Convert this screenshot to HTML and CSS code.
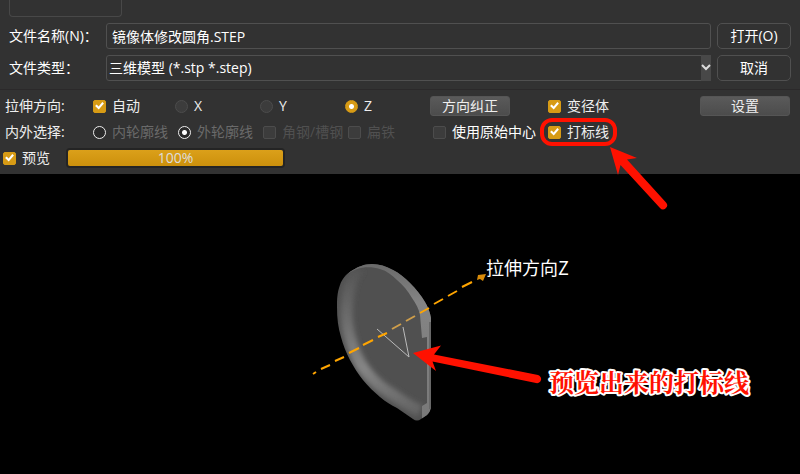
FILE: index.html
```html
<!DOCTYPE html>
<html lang="zh-CN">
  <head>
    <meta charset="utf-8">
    <meta name="viewport" content="width=device-width, initial-scale=1.0">
    <title>打开</title>
    <link rel="stylesheet" href="styles.css">
  </head>
  <body>
    <form class="panel">
      <div class="file-section">
        <div class="side-list"></div>
        <div class="file-row">
          <label for="file-name">文件名称(N)：</label>
          <input class="field" id="file-name" type="text" value="镜像体修改圆角.STEP">
          <button class="dialog-button" type="button">打开(O)</button>
        </div>
        <div class="file-row">
          <label for="file-type">文件类型：</label>
          <span class="select-wrap">
            <select class="field" id="file-type">
              <option>三维模型 (*.stp *.step)</option>
            </select>
            <svg class="chevron" viewBox="0 0 10 26"><path d="M1 10 L5 14 L9 10"/></svg>
          </span>
          <button class="dialog-button" type="button">取消</button>
        </div>
      </div>

      <div class="options">
        <div class="option-row direction-row">
          <span>拉伸方向:</span>
          <label class="option"><input type="checkbox" checked>自动</label>
          <label class="option"><input type="radio" name="axis" disabled>X</label>
          <label class="option"><input type="radio" name="axis" disabled>Y</label>
          <label class="option"><input class="solid" type="radio" name="axis" checked>Z</label>
          <button class="tool-button" type="button">方向纠正</button>
          <label class="option"><input type="checkbox" checked>变径体</label>
          <button class="tool-button settings" type="button">设置</button>
        </div>
        <div class="option-row contour-row">
          <span>内外选择:</span>
          <label class="option dim"><input type="radio" name="contour">内轮廓线</label>
          <label class="option dim"><input type="radio" name="contour" checked>外轮廓线</label>
          <label class="option off"><input type="checkbox" disabled>角钢/槽钢</label>
          <label class="option off"><input type="checkbox" disabled>扁铁</label>
          <label class="option bright"><input type="checkbox">使用原始中心</label>
          <label class="option marked">
            <input type="checkbox" checked>打标线
            <svg class="mark-arrow" viewBox="610 147 58 64">
              <path d="M610 147 L637 158 L627 159.5 L666 202.5 A4 4 0 0 1 660 208 L620.5 165 L618 175 Z"/>
            </svg>
          </label>
        </div>
        <div class="option-row preview-row">
          <label class="option"><input type="checkbox" checked>预览</label>
          <div class="progress" role="progressbar" aria-label="预览" aria-valuenow="100">
            <div class="progress-fill" style="width: 100%"></div>
            <span class="progress-text">100%</span>
          </div>
        </div>
      </div>
    </form>

    <div class="viewport">
      <svg class="scene" viewBox="0 174 800 300">
        <defs>
          <clipPath id="body-clip">
            <path d="M372 264 C364 264 358 267 353 270 C346 274 342 279 340 285 C337 293 337 300 337 307 C337 318 338 327 341 337 C343 345 346 352 350 360 C354 367 358 374 363 380 C368 386 374 392 380 397 C386 402 391 405 397 408 L413 419 Q417 422 421 419 L427 415 Q431 411 431 406 L431 318 C430 312 428 307 425 302 C421 295 416 289 410 283 C405 278 399 273 393 270 C386 266 379 264 372 264 Z"/>
          </clipPath>
          <linearGradient id="rim" x1="0" y1="0" x2="0" y2="1">
            <stop offset="0" stop-color="#606060"/>
            <stop offset="0.3" stop-color="#848484"/>
            <stop offset="1" stop-color="#787878"/>
          </linearGradient>
          <linearGradient id="bevel" x1="0" y1="0" x2="0" y2="1">
            <stop offset="0" stop-color="#545454"/>
            <stop offset="0.35" stop-color="#6c6c6c"/>
            <stop offset="0.7" stop-color="#868686"/>
            <stop offset="1" stop-color="#646464"/>
          </linearGradient>
          <filter id="soft" x="-20%" y="-20%" width="140%" height="140%">
            <feGaussianBlur stdDeviation="2.5"/>
          </filter>
        </defs>
        <!-- part -->
        <g clip-path="url(#body-clip)">
          <rect x="330" y="260" width="110" height="170" fill="#505050"/>
          <path d="M359 268 C347 280 344 312 349 334 C353 350 358 362 366 372 C373 381 381 388 391 394 C401 400 408 406 420 411" fill="none" stroke="url(#bevel)" stroke-width="12" filter="url(#soft)"/>
          <path d="M345 276 C356 266 370 266 380 269 C387 271 392 275 397 280 C403 285 408 291 412 298 C416 304 419 309 420 315 L422 338 L427 337 L427 403 L422 406 L422 424 L440 424 L440 250 L345 250 Z" fill="url(#rim)"/>
          <path d="M430 322 L430 409" fill="none" stroke="#686868" stroke-width="2"/>
        </g>
        <!-- marking lines -->
        <path d="M377 329 L409 357 L403 327" fill="none" stroke="#bbb" stroke-width="1"/>
        <!-- extrusion axis -->
        <g class="axis">
          <path d="M313 374 l3 -2 M321 369 l9 -4 M335 361 l9 -4 M349 353 l10 -5 M363 345 l10 -5 M378 337 l9 -4"/>
          <path class="behind" d="M392 329 l9 -5 M406 321 l9 -5"/>
          <path d="M420 313 l9 -5 M434 304 l9 -5 M448 296 l9 -5 M462 287 l10 -5"/>
          <path class="tip" d="M478 275 L486 274 L483 281 L480 279 L477 280 Z"/>
        </g>
        <text class="axis-name" x="486" y="275">拉伸方向Z</text>
        <path fill="#f10" d="M413 353 L441 345.5 L434 354.5 L538 375 A4 4 0 0 1 536 383 L432.5 361.5 L436 371 Z"/>
        <text class="note" x="549" y="392">预览出来的打标线</text>
      </svg>
    </div>
  </body>
</html>
```
FILE: styles.css
```css
html, body {
  height: 100%;
  margin: 0;
}
body {
  display: flex;
  flex-direction: column;
  background: #000;
  color: #eee;
  font-family: "Open Sans", "Noto Sans CJK SC", sans-serif;
  font-size: 14px;
  line-height: 20px;
  overflow: hidden;
}
button, input, select {
  margin: 0;
  color: inherit;
  font: inherit;
  box-sizing: border-box;
}
.panel {
  background: #323232;
}

/* file name and type */
.file-section {
  display: flex;
  flex-direction: column;
  gap: 6px;
  padding: 0 9px 8px;
  border-bottom: 1px solid #2b292a;
  color: #fff;
}
.side-list {
  width: 111px;
  height: 16px;
  border: 1px solid #484848;
  border-top: 0;
  border-radius: 0 0 4px 4px;
}
.file-row {
  display: grid;
  grid-template-columns: 91px 1fr 74px;
  column-gap: 6px;
  align-items: center;
  white-space: nowrap;
}
.field {
  display: block;
  width: 100%;
  height: 26px;
  padding: 0 5px;
  background: #323232;
  border: 1px solid #505050;
  border-radius: 3px;
  appearance: none;
  outline: none;
}
select.field {
  padding: 0 2px;
}
.select-wrap {
  position: relative;
}
.chevron {
  position: absolute;
  top: 0;
  right: 0;
  width: 10px;
  height: 26px;
  background: #484848;
  fill: none;
  stroke: #ddd;
  stroke-width: 2;
  pointer-events: none;
}
.dialog-button {
  height: 26px;
  padding: 0;
  background: #323232;
  border: 1px solid #505050;
  border-radius: 5px;
}

/* options */
.options {
  padding: 3px 10px 3px 5px;
}
.option-row {
  display: grid;
  height: 26px;
  align-items: center;
  white-space: nowrap;
}
.direction-row {
  grid-template-columns: 88px 82px 85px 85px 85px 118px 1fr 90px;
}
.contour-row {
  grid-template-columns: 88px 85px 85px 85px 85px 115px 1fr;
}
.preview-row {
  grid-template-columns: 63px 219px;
  margin-left: -2px;
}
.option {
  display: flex;
  align-items: center;
  gap: 6px;
}
.dim {
  color: #6a6a6a;
}
.off {
  color: #505050;
}
.bright {
  color: #fff;
}
.option input {
  position: relative;
  flex: none;
  width: 13px;
  height: 13px;
  background: #3c3c3c;
  border: 1px solid #4c4c4c;
  appearance: none;
}
.option input[type="checkbox"] {
  border-radius: 2px;
}
.option input[type="checkbox"]:checked {
  background: #d79b15;
  border-color: #d79b15;
}
.option input[type="checkbox"]:checked::after {
  content: "";
  position: absolute;
  inset: 0;
  background: #fff;
  clip-path: polygon(10% 50%, 24% 36%, 42% 54%, 76% 14%, 90% 28%, 43% 82%);
}
.option input[type="radio"] {
  border-radius: 50%;
}
.option input[type="radio"]:enabled {
  background: #2a2a2a;
  border-color: #eee;
}
.option input[type="radio"]:checked {
  background: radial-gradient(circle, #fff 2px, #2a2a2a 3px);
}
.option input.solid:checked {
  background: radial-gradient(circle, #fff 2px, #d79b15 3px);
  border-color: #d79b15;
}
.tool-button {
  width: 80px;
  height: 20px;
  padding: 0;
  background: linear-gradient(#5a5a5a, #4c4c4c);
  border: 1px solid #555;
  border-radius: 3px;
  line-height: 18px;
}
.settings {
  width: 90px;
}

/* red frame with its arrow */
.marked {
  position: relative;
  justify-self: start;
}
.marked::before {
  content: "";
  position: absolute;
  inset: -4px -8px;
  border: 4px solid #f10;
  border-radius: 12px;
}
.mark-arrow {
  position: absolute;
  left: 62px;
  top: 25px;
  width: 58px;
  height: 64px;
  fill: #f10;
  z-index: 1;
}

.progress {
  position: relative;
  width: 215px;
  height: 16px;
  border: 2px solid #242424;
  border-radius: 4px;
}
.progress-fill {
  height: 100%;
  background: linear-gradient(#dba01a, #cc900c);
  border-radius: 2px;
}
.progress-text {
  position: absolute;
  inset: 0;
  color: #ddd;
  line-height: 16px;
  text-align: center;
}

/* 3D view */
.viewport {
  flex: 1;
  overflow: hidden;
}
.scene {
  display: block;
  width: 800px;
  height: 300px;
}
.axis {
  fill: none;
  stroke: #ffa500;
  stroke-width: 2;
}
.axis .behind {
  stroke: #cf9e4a;
}
.axis .tip {
  fill: #d98c0a;
  stroke: none;
}
.axis-name {
  fill: #fff;
  font-family: "Noto Sans CJK SC", sans-serif;
  font-size: 18px;
}
.note {
  fill: #f10;
  stroke: #fff;
  stroke-width: 4px;
  stroke-linejoin: round;
  paint-order: stroke;
  font-family: "Noto Serif CJK SC", "Noto Sans CJK SC", serif;
  font-size: 25px;
  font-weight: 700;
}
```
